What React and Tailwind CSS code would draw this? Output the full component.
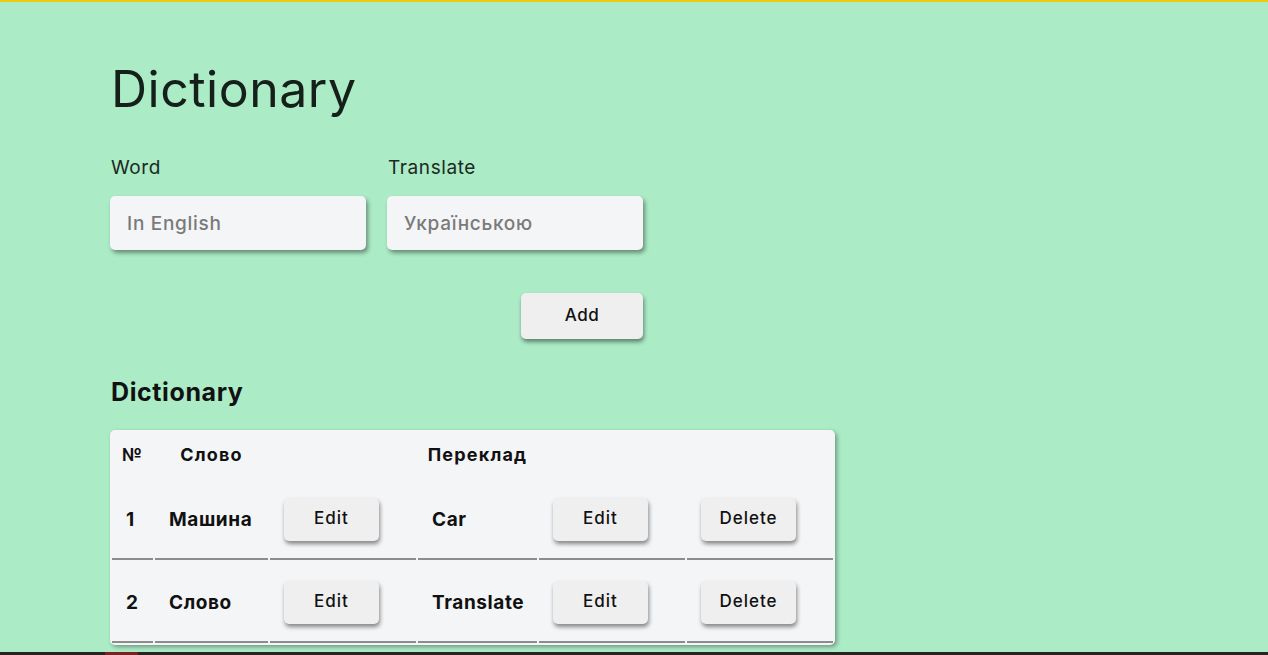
import React from "react";

const rows = [
  { n: 1, word: "Машина", tr: "Car" },
  { n: 2, word: "Слово", tr: "Translate" },
];

function Btn({ children, className = "" }) {
  return (
    <button
      className={
        "bg-[#efefef] rounded-[5px] shadow-[1px_3px_4px_rgba(0,0,0,0.45)] font-medium text-[#111] " +
        className
      }
    >
      {children}
    </button>
  );
}

export default function App() {
  return (
    <div className="relative min-h-[655px] h-[655px] overflow-hidden bg-[#abebc6] border-t-2 border-[#eec914] font-['Inter',sans-serif] text-[#111]">
      <div className="pl-[111px] pt-[57px]">
        <h1 className="text-[50px] leading-[60px] font-normal tracking-[0.5px] text-[#142019]">Dictionary</h1>

        <div className="mt-[38px] -ml-[1px] flex gap-[21px]">
          <div className="w-[256px] flex flex-col">
            <label className="text-[19px] leading-[22px] tracking-[0.6px] text-[#1b2a22] pl-[1px]">Word</label>
            <input
              placeholder="In English"
              className="mt-[17px] h-[54px] w-[256px] rounded-[5px] bg-[#f4f5f7] shadow-[2px_3px_4px_rgba(0,0,0,0.4)] px-[17px] text-[19px] tracking-[0.7px] font-medium placeholder:text-[#7a7a7a] outline-none"
            />
          </div>
          <div className="w-[256px] flex flex-col">
            <label className="text-[19px] leading-[22px] tracking-[0.6px] text-[#1b2a22] pl-[1px]">Translate</label>
            <input
              placeholder="Українською"
              className="mt-[17px] h-[54px] w-[256px] rounded-[5px] bg-[#f4f5f7] shadow-[2px_3px_4px_rgba(0,0,0,0.4)] px-[17px] text-[19px] tracking-[0.7px] font-medium placeholder:text-[#7a7a7a] outline-none"
            />
          </div>
        </div>

        <div className="w-[533px] -ml-[1px] flex justify-end mt-[43px]">
          <Btn className="w-[122px] h-[46px] text-[17px] tracking-[0.5px]">Add</Btn>
        </div>

        <h2 className="mt-[38px] text-[25px] leading-[30px] tracking-[0.6px] font-bold text-[#111]">Dictionary</h2>

        <div className="mt-[23px] -ml-[1px] w-[725px] rounded-[5px] bg-[#f4f5f7] shadow-[2px_2px_4px_rgba(0,0,0,0.35)]">
          <table className="w-[725px] table-fixed border-separate border-spacing-[2px]">
            <colgroup>
              <col className="w-[41px]" />
              <col className="w-[113px]" />
              <col className="w-[146px]" />
              <col className="w-[119px]" />
              <col className="w-[146px]" />
              <col className="w-[146px]" />
            </colgroup>
            <thead>
              <tr className="h-[45px] text-[18px] tracking-[1.2px] font-bold">
                <th className="text-center p-0">№</th>
                <th className="text-center p-0">Слово</th>
                <th className="p-0"></th>
                <th className="text-center p-0">Переклад</th>
                <th className="p-0"></th>
                <th className="p-0"></th>
              </tr>
            </thead>
            <tbody>
              {rows.map((r) => (
                <tr key={r.n} className="h-[81px] text-[19px] tracking-[0.6px] font-bold">
                  <td className="pl-[14px] pt-[3px] border-b-2 border-[#8c8c8c]">{r.n}</td>
                  <td className="pl-[14px] pt-[3px] border-b-2 border-[#8c8c8c]">{r.word}</td>
                  <td className="pl-[14px] border-b-2 border-[#8c8c8c]">
                    <Btn className="w-[95px] h-[43px] mt-[1px] text-[17px] tracking-[1px]">Edit</Btn>
                  </td>
                  <td className="pl-[14px] pt-[3px] border-b-2 border-[#8c8c8c]">{r.tr}</td>
                  <td className="pl-[14px] border-b-2 border-[#8c8c8c]">
                    <Btn className="w-[95px] h-[43px] mt-[1px] text-[17px] tracking-[1px]">Edit</Btn>
                  </td>
                  <td className="pl-[14px] border-b-2 border-[#8c8c8c]">
                    <Btn className="w-[95px] h-[43px] mt-[1px] text-[17px] tracking-[1px]">Delete</Btn>
                  </td>
                </tr>
              ))}
            </tbody>
          </table>
        </div>
      </div>

      <div className="absolute left-0 right-0 bottom-0 h-[3px] bg-[#2a2420]">
        <div className="absolute left-[105px] w-[33px] top-0 bottom-0 bg-[#7a2222]" />
      </div>
    </div>
  );
}
